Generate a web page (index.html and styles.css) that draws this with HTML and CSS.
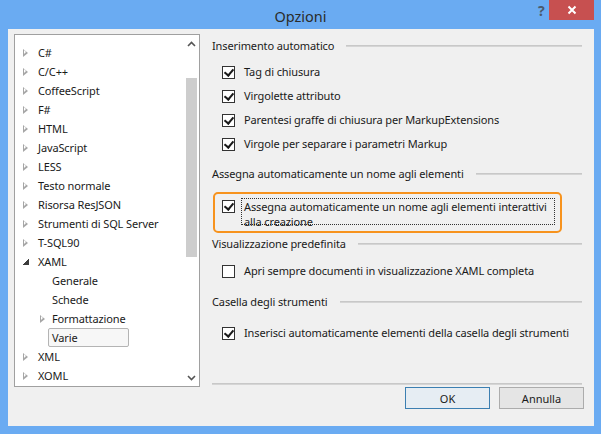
FILE: index.html
```html
<!DOCTYPE html>
<html lang="it">
<head>
<meta charset="utf-8">
<title>Opzioni</title>
<link rel="stylesheet" href="styles.css">
</head>
<body>
<div class="window">
  <div class="titlebar">
    <span class="title">Opzioni</span>
    <span class="help">?</span>
    <span class="close"><svg width="12" height="12" viewBox="0 0 12 12"><path d="M2.5 2.5 L9.5 9.5 M9.5 2.5 L2.5 9.5" stroke="#fff" stroke-width="2"/></svg></span>
  </div>
  <div class="client">
    <div class="main">
      <div class="tree">
        <ul class="tree-list">
          <li class="node"><span class="arrow"></span>C#</li>
          <li class="node"><span class="arrow"></span>C/C++</li>
          <li class="node"><span class="arrow"></span>CoffeeScript</li>
          <li class="node"><span class="arrow"></span>F#</li>
          <li class="node"><span class="arrow"></span>HTML</li>
          <li class="node"><span class="arrow"></span>JavaScript</li>
          <li class="node"><span class="arrow"></span>LESS</li>
          <li class="node"><span class="arrow"></span>Testo normale</li>
          <li class="node"><span class="arrow"></span>Risorsa ResJSON</li>
          <li class="node"><span class="arrow"></span>Strumenti di SQL Server</li>
          <li class="node"><span class="arrow"></span>T-SQL90</li>
          <li class="node"><span class="arrow arrow-open"></span>XAML</li>
          <li class="node node-child"><span class="arrow arrow-none"></span>Generale</li>
          <li class="node node-child"><span class="arrow arrow-none"></span>Schede</li>
          <li class="node node-child"><span class="arrow"></span>Formattazione</li>
          <li class="node node-child"><span class="selected">Varie</span></li>
          <li class="node"><span class="arrow"></span>XML</li>
          <li class="node"><span class="arrow"></span>XOML</li>
        </ul>
        <div class="scrollbar">
          <span class="sb-btn"><svg width="9" height="6" viewBox="0 0 9 6"><path d="M1 5 L4.5 1.5 L8 5" fill="none" stroke="#555" stroke-width="1.6"/></svg></span>
          <div class="sb-track"><div class="sb-thumb"></div></div>
          <span class="sb-btn"><svg width="9" height="6" viewBox="0 0 9 6"><path d="M1 1 L4.5 4.5 L8 1" fill="none" stroke="#555" stroke-width="1.6"/></svg></span>
        </div>
      </div>
      <div class="panel">
        <div class="group-head head-1"><span>Inserimento automatico</span><span class="rule"></span></div>
        <div class="option first"><span class="cb checked"></span><span>Tag di chiusura</span></div>
        <div class="option"><span class="cb checked"></span><span>Virgolette attributo</span></div>
        <div class="option"><span class="cb checked"></span><span>Parentesi graffe di chiusura per MarkupExtensions</span></div>
        <div class="option"><span class="cb checked"></span><span>Virgole per separare i parametri Markup</span></div>

        <div class="group-head head-2"><span>Assegna automaticamente un nome agli elementi</span><span class="rule"></span></div>
        <div class="highlight">
          <span class="cb checked"></span>
          <span class="focus">Assegna automaticamente un nome agli elementi interattivi<br>alla creazione</span>
        </div>

        <div class="group-head head-3"><span>Visualizzazione predefinita</span><span class="rule"></span></div>
        <div class="option opt-3"><span class="cb"></span><span>Apri sempre documenti in visualizzazione XAML completa</span></div>

        <div class="group-head head-4"><span>Casella degli strumenti</span><span class="rule"></span></div>
        <div class="option opt-4"><span class="cb checked"></span><span>Inserisci automaticamente elementi della casella degli strumenti</span></div>

        <div class="panel-foot"></div>
      </div>
    </div>
    <div class="footer">
      <button class="btn btn-default">OK</button>
      <button class="btn">Annulla</button>
    </div>
  </div>
</div>
</body>
</html>
```
FILE: styles.css
```css
* { box-sizing: border-box; }
html, body { margin: 0; padding: 0; }
body {
  width: 601px;
  height: 434px;
  overflow: hidden;
  font-family: "Noto Sans", "Open Sans", sans-serif;
  font-size: 11px;
  letter-spacing: -0.12px;
  color: #1a1a1a;
  background: #6aabf2;
}
.window {
  width: 601px;
  height: 434px;
  display: flex;
  flex-direction: column;
  background: #6aabf2;
}
.titlebar {
  position: relative;
  height: 29px;
  display: flex;
  align-items: center;
  justify-content: center;
}
.title {
  font-size: 14.5px;
  letter-spacing: 0;
  color: #2b2b2b;
  margin-top: 3px;
}
.help {
  position: absolute;
  left: 538px;
  top: 1px;
  font-size: 14px;
  font-weight: bold;
  color: #4a5a6e;
}
.close {
  position: absolute;
  left: 549px;
  top: 0;
  width: 45px;
  height: 20px;
  background: #c75050;
  display: flex;
  align-items: center;
  justify-content: center;
}
.close svg { display: block; }
.client {
  margin: 0 7px 8px 8px;
  height: 397px;
  background: #f0f0f0;
  display: flex;
  flex-direction: column;
}
.main {
  display: flex;
  padding-top: 5px;
  height: 358px;
}
.tree {
  margin-left: 6px;
  width: 186px;
  height: 353px;
  border: 1px solid #a0a0a0;
  background: #fff;
  display: flex;
}
.tree-list {
  list-style: none;
  margin: 0;
  padding: 8px 0 0 0;
  flex: 1;
}
.node {
  height: 19px;
  line-height: 19px;
  display: flex;
  align-items: center;
  padding-left: 8px;
  white-space: nowrap;
}
.node-child { padding-left: 25px; }
.arrow {
  width: 0;
  height: 0;
  border-top: 4.5px solid transparent;
  border-bottom: 4.5px solid transparent;
  border-left: 5px solid #a6a6a6;
  margin-right: 10px;
  position: relative;
}
.node-child .arrow { margin-right: 7px; }
.arrow::after {
  content: "";
  position: absolute;
  left: -4px;
  top: -2.5px;
  border-top: 2.5px solid transparent;
  border-bottom: 2.5px solid transparent;
  border-left: 2.5px solid #fff;
}
.arrow-open {
  border: none;
  width: 6px;
  height: 6px;
  margin-right: 9px;
  background: linear-gradient(135deg, transparent 50%, #3c3c3c 50%);
}
.arrow-open::after { display: none; }
.arrow-none {
  border: none;
  width: 5px;
  visibility: hidden;
}
.selected {
  margin-left: 8px;
  width: 81px;
  height: 19px;
  line-height: 17px;
  padding-left: 3px;
  border: 1px solid #b4b4b4;
  border-radius: 2px;
  background: #f7f7f7;
}
.scrollbar {
  width: 15px;
  display: flex;
  flex-direction: column;
  align-items: center;
  background: #fff;
}
.sb-btn {
  height: 17px;
  display: flex;
  align-items: center;
  justify-content: center;
}
.sb-btn svg { display: block; }
.sb-track {
  flex: 1;
  width: 100%;
  padding: 26px 2px 0 2px;
}
.sb-thumb {
  height: 179px;
  background: #cdcdcd;
}
.panel {
  flex: 1;
  display: flex;
  flex-direction: column;
  padding: 0 12px 0 12px;
  height: 353px;
}
.group-head {
  display: flex;
  align-items: center;
  height: 16px;
  line-height: 16px;
  white-space: nowrap;
}
.rule {
  flex: 1;
  margin-left: 12px;
  height: 2px;
  background: #d5d5d5;
  border-top: 1px solid #c8c8c8;
}
.head-1 { margin-top: 4px; }
.head-2 { margin-top: 14px; }
.head-3 { margin-top: 3px; }
.head-4 { margin-top: 15px; }
.option {
  display: flex;
  align-items: center;
  height: 16px;
  line-height: 16px;
  margin-top: 8px;
  padding-left: 10px;
  white-space: nowrap;
}
.option.first { margin-top: 10px; }
.option.opt-3 { margin-top: 11px; }
.option.opt-4 { margin-top: 15px; }
.cb {
  width: 13px;
  height: 13px;
  border: 1px solid #333;
  background: #fff;
  margin-right: 9px;
  flex: none;
  position: relative;
}
.cb.checked::after {
  content: "";
  position: absolute;
  left: 3px;
  top: 0px;
  width: 4px;
  height: 7px;
  border-right: 2px solid #1a1a1a;
  border-bottom: 2px solid #1a1a1a;
  transform: rotate(40deg);
}
.highlight {
  margin-top: 10px;
  margin-left: 1px;
  width: 349px;
  height: 41px;
  border: 2px solid #f7931e;
  border-radius: 5px;
  display: flex;
  align-items: flex-start;
  padding: 4px 0 0 7px;
}
.highlight .cb { margin-top: 2px; margin-right: 6px; }
.focus {
  width: 314px;
  height: 27px;
  border: 1px dotted #333;
  padding: 0 0 0 2px;
  line-height: 15px;
  white-space: nowrap;
}
.panel-foot {
  margin-top: auto;
  margin-bottom: 2px;
  height: 2px;
  background: #d5d5d5;
  border-top: 1px solid #c8c8c8;
}
.footer {
  display: flex;
  justify-content: flex-end;
  gap: 9px;
  padding-right: 10px;
}
.btn {
  width: 85px;
  height: 22px;
  font-family: inherit;
  font-size: 11px;
  color: #1a1a1a;
  border: 1px solid #acacac;
  background: #e5e5e5;
  padding: 0;
  margin: 0;
}
.btn-default {
  border-color: #3c7fb1;
  background: #e6edf3;
}
```
